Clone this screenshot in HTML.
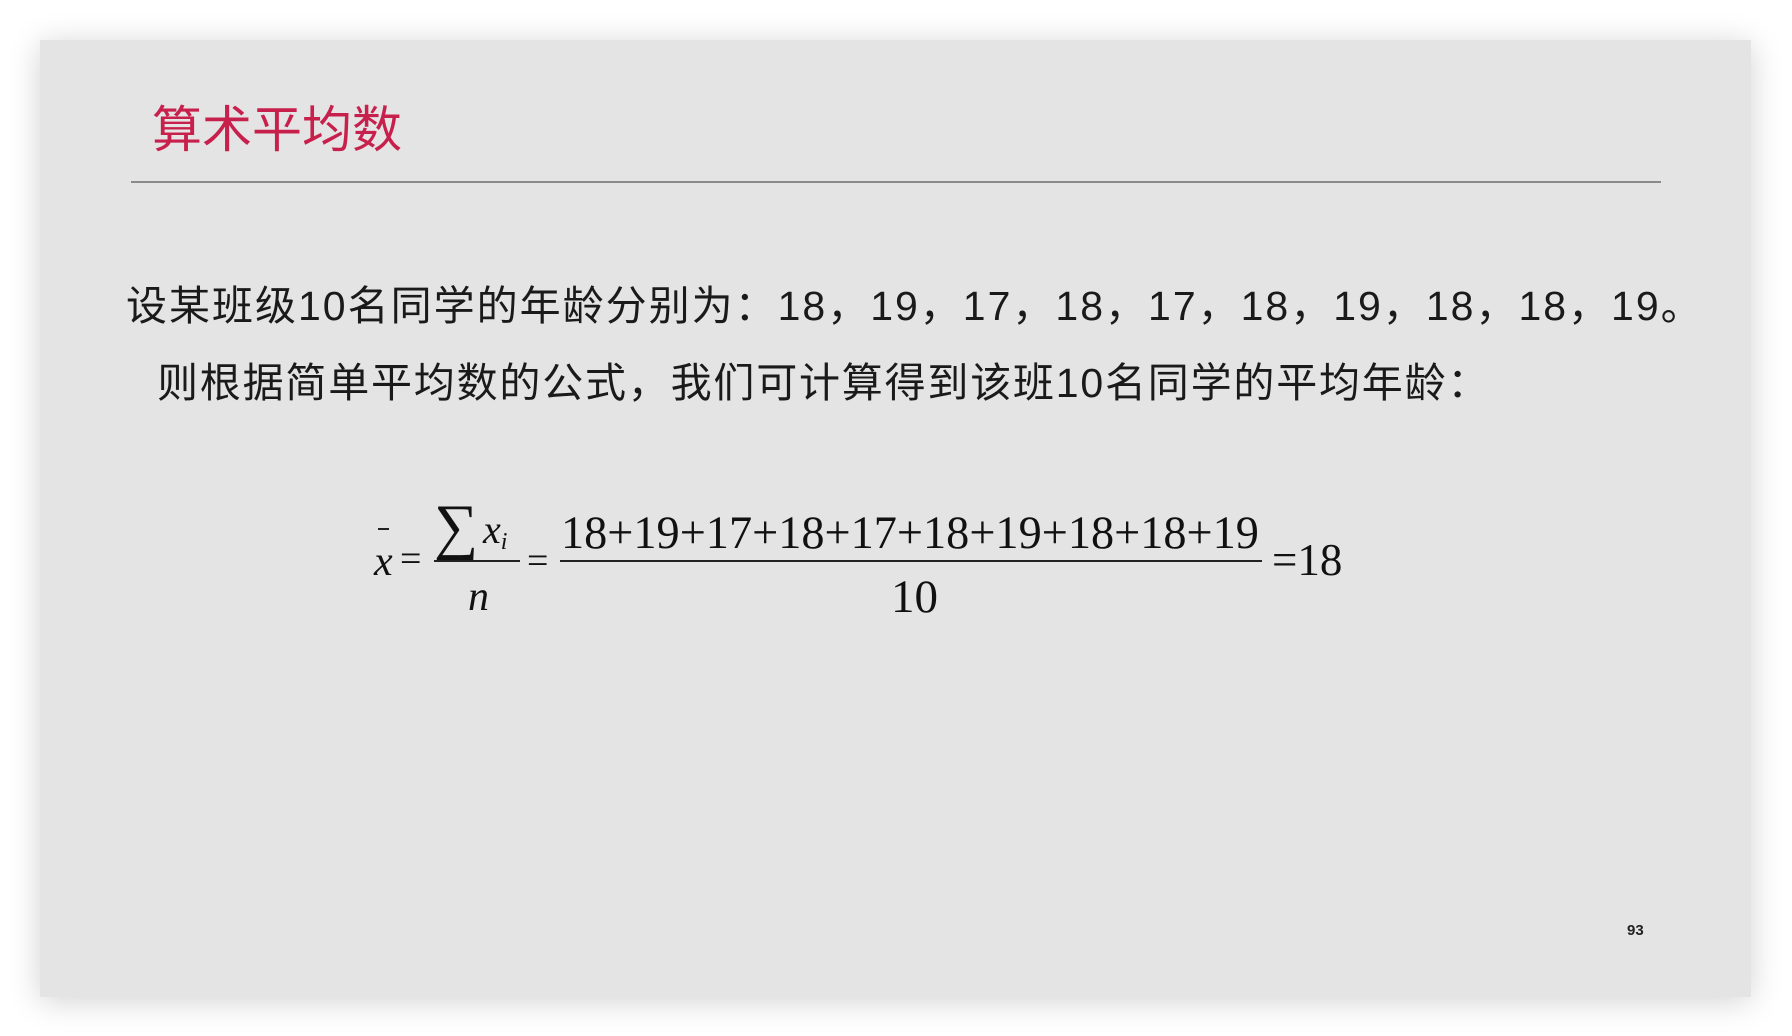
<!DOCTYPE html>
<html><head><meta charset="utf-8"><style>
html,body{margin:0;padding:0;background:#fff;width:1792px;height:1036px;overflow:hidden}
.slide{position:absolute;left:40px;top:40px;width:1711px;height:957px;background:#e4e4e4;box-shadow:0 4px 30px rgba(0,0,0,0.18)}
.a{position:absolute;white-space:nowrap}
.cjk{font-family:"Liberation Sans","Noto Sans CJK SC",sans-serif}
.m{font-family:"Liberation Serif",serif;color:#111;line-height:1}
</style></head><body>
<div class="slide"></div>
<div class="a cjk" style="left:152px;top:100px;font-size:50px;line-height:60px;color:#c8204c">算术平均数</div>
<div class="a" style="left:131px;top:181px;width:1530px;height:2px;background:#8a8a8a"></div>
<div class="a cjk" style="left:126px;top:280px;font-size:41px;line-height:52px;color:#1a1a1a;letter-spacing:2px">设某班级10名同学的年龄分别为：18，19，17，18，17，18，19，18，18，19。</div>
<div class="a cjk" style="left:157px;top:357px;font-size:41px;line-height:52px;color:#1a1a1a;letter-spacing:1.8px">则根据简单平均数的公式，我们可计算得到该班10名同学的平均年龄：</div>

<div class="a m" style="left:374px;top:541px;font-size:42px;font-style:italic">x</div>
<div class="a" style="left:378px;top:528px;width:11px;height:2px;background:#222"></div>
<div class="a m" style="left:400px;top:540px;font-size:38px">=</div>
<div class="a m" style="left:434px;top:496px;font-size:62px">∑</div>
<div class="a m" style="left:483px;top:510px;font-size:40px;font-style:italic">x<span style="font-size:24px;vertical-align:-6px">i</span></div>
<div class="a" style="left:434px;top:560px;width:86px;height:2px;background:#222"></div>
<div class="a m" style="left:468px;top:576px;font-size:42px;font-style:italic">n</div>
<div class="a m" style="left:527px;top:542px;font-size:38px">=</div>
<div class="a m" style="left:561px;top:510px;font-size:47px;transform:scaleX(0.985);transform-origin:left">18+19+17+18+17+18+19+18+18+19</div>
<div class="a" style="left:560px;top:560px;width:702px;height:2px;background:#222"></div>
<div class="a m" style="left:891px;top:574px;font-size:47px">10</div>
<div class="a m" style="left:1272px;top:538px;font-size:45px">=18</div>
<div class="a" style="left:1627px;top:922px;font-family:'Liberation Sans',sans-serif;font-size:15px;font-weight:bold;color:#222">93</div>
</body></html>
